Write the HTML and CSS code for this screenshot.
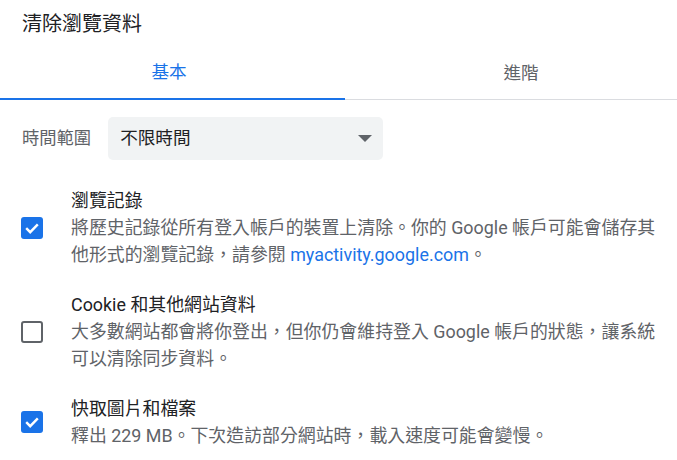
FILE: index.html
```html
<!DOCTYPE html>
<html lang="zh-Hant">
<head>
<meta charset="utf-8">
<title>清除瀏覽資料</title>
<link rel="stylesheet" href="styles.css">
</head>
<body>
<div class="dialog">
  <h1 class="title">清除瀏覽資料</h1>
  <div class="tabs">
    <div class="tab tab-active">基本</div>
    <div class="tab tab-adv">進階</div>
  </div>
  <div class="range">
    <span class="range-label">時間範圍</span>
    <div class="select">
      <span>不限時間</span>
      <span class="arrow"></span>
    </div>
  </div>
  <div class="options">
    <div class="option">
      <span class="cb cb-on"><svg viewBox="0 0 22 22" width="22" height="22"><polyline points="5.2,11.2 9.2,15.2 16.8,7.4" fill="none" stroke="#fff" stroke-width="2.4"/></svg></span>
      <div class="opt-text">
        <div class="opt-head">瀏覽記錄</div>
        <div class="opt-desc">將歷史記錄從所有登入帳戶的裝置上清除。你的 Google 帳戶可能會儲存其他形式的瀏覽記錄，請參閱 <a class="link" href="#">myactivity.google.com</a>。</div>
      </div>
    </div>
    <div class="option">
      <span class="cb cb-off"></span>
      <div class="opt-text">
        <div class="opt-head">Cookie 和其他網站資料</div>
        <div class="opt-desc">大多數網站都會將你登出，但你仍會維持登入 Google 帳戶的狀態，讓系統可以清除同步資料。</div>
      </div>
    </div>
    <div class="option">
      <span class="cb cb-on"><svg viewBox="0 0 22 22" width="22" height="22"><polyline points="5.2,11.2 9.2,15.2 16.8,7.4" fill="none" stroke="#fff" stroke-width="2.4"/></svg></span>
      <div class="opt-text">
        <div class="opt-head">快取圖片和檔案</div>
        <div class="opt-desc">釋出 229 MB。下次造訪部分網站時，載入速度可能會變慢。</div>
      </div>
    </div>
  </div>
</div>
</body>
</html>
```
FILE: styles.css
```css
html, body {
  margin: 0;
  padding: 0;
  background: #fff;
}
body {
  font-family: Roboto, "Noto Sans CJK TC", "Noto Sans", sans-serif;
  color: #202124;
  font-size: 17.9px;
  line-height: 27px;
}
.dialog {
  width: 677px;
  height: 460px;
  overflow: hidden;
}
.title {
  margin: 0;
  padding: 11px 22px 7px;
  font-size: 20px;
  font-weight: normal;
  line-height: 27px;
  color: #202124;
}
.tabs {
  display: flex;
  border-bottom: 1px solid #dadce0;
  height: 54px;
}
.tab {
  display: flex;
  align-items: center;
  justify-content: center;
  color: #5f6368;
  font-size: 17.6px;
  box-sizing: border-box;
  height: 55px;
  margin-bottom: -1px;
}
.tab-active {
  width: 345px;
  padding-right: 7px;
  color: #1a73e8;
  border-bottom: 2px solid #1a73e8;
  padding-top: 1px;
}
.tab-adv {
  flex: 1;
  padding-left: 20px;
  padding-top: 1px;
}
.range {
  display: flex;
  align-items: center;
  gap: 17px;
  margin: 17px 0 0 22px;
}
.range-label {
  color: #5f6368;
  font-size: 17.3px;
}
.select {
  width: 275px;
  height: 43px;
  box-sizing: border-box;
  background: #f1f3f4;
  border-radius: 5px;
  display: flex;
  align-items: center;
  justify-content: space-between;
  padding: 0 11px 0 12px;
  color: #202124;
  font-size: 17.6px;
}
.arrow {
  width: 0;
  height: 0;
  border-left: 7px solid transparent;
  border-right: 7px solid transparent;
  border-top: 7px solid #5f6368;
}
.options {
  display: flex;
  flex-direction: column;
  gap: 23px;
  margin-top: 27px;
}
.option {
  display: flex;
  align-items: center;
  gap: 28px;
  padding-left: 21px;
}
.cb {
  flex: none;
  width: 22px;
  height: 22px;
  box-sizing: border-box;
  border-radius: 3px;
  display: block;
}
.cb svg {
  display: block;
}
.cb-on {
  background: #1a73e8;
}
.cb-off {
  border: 2.7px solid #5f6368;
}
.opt-text {
  width: 592px;
}
.opt-head {
  color: #202124;
}
.opt-desc {
  color: #5f6368;
}
.link {
  color: #1a73e8;
  text-decoration: none;
}
```
